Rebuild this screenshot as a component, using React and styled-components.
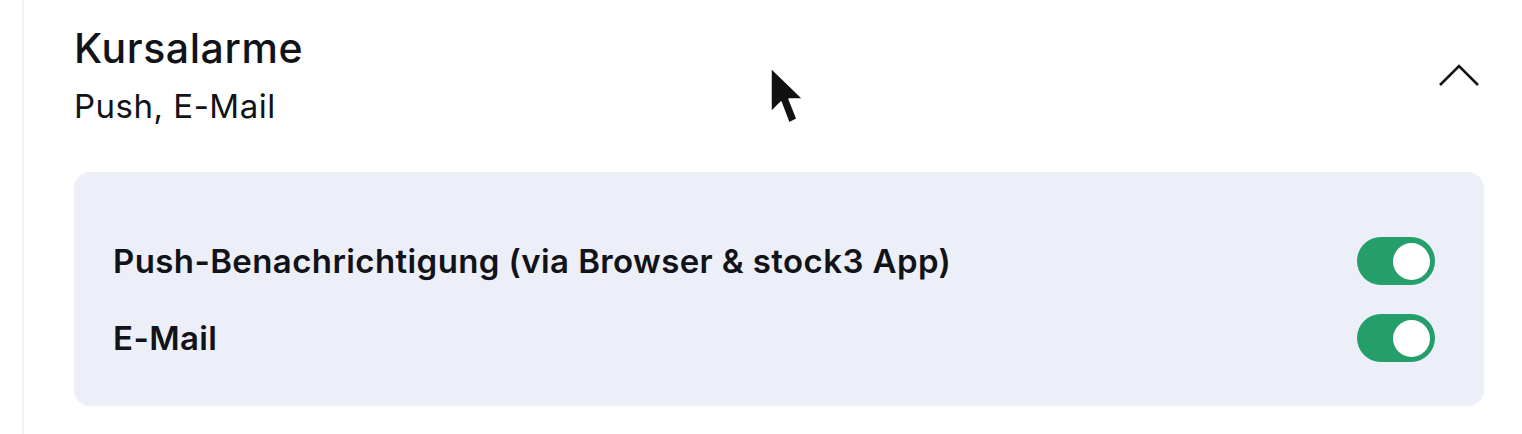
import styled, { createGlobalStyle } from "styled-components";

const GlobalStyle = createGlobalStyle`
  html, body {
    margin: 0;
    padding: 0;
    background: #ffffff;
  }
  body {
    font-family: Inter, "Noto Sans", sans-serif;
    color: #111318;
  }
`;

const Page = styled.div`
  position: relative;
  height: 434px;
  padding-left: 22px;
  overflow: hidden;
`;

const Section = styled.section`
  height: 100%;
  border-left: 2px solid #eef0f4;
  padding: 24px 38px 0 50px;
`;

const Header = styled.div`
  display: flex;
  align-items: center;
  justify-content: space-between;
`;

const Titles = styled.div`
  display: flex;
  flex-direction: column;
`;

const Title = styled.h2`
  margin: 0;
  font-size: 41px;
  line-height: 48px;
  font-weight: 500;
  letter-spacing: 0.6px;
`;

const Subtitle = styled.div`
  margin-top: 15px;
  font-size: 33px;
  line-height: 38px;
  font-weight: 400;
  letter-spacing: 0.5px;
`;

const Chevron = styled.button`
  border: 0;
  background: none;
  padding: 0;
  margin-right: 2px;
  display: flex;
`;

const Panel = styled.div`
  margin-top: 47px;
  background: #eceff7;
  border-radius: 16px;
  padding: 65px 49px 44px 39px;
  display: flex;
  flex-direction: column;
  gap: 29px;
`;

const Row = styled.label`
  display: flex;
  align-items: center;
  justify-content: space-between;
`;

const RowLabel = styled.span`
  font-size: 33px;
  font-weight: 600;
  letter-spacing: 0.4px;
`;

const Toggle = styled.span`
  width: 78px;
  height: 48px;
  border-radius: 24px;
  background: ${(p) => (p.on ? "#249f6b" : "#c5cad6")};
  display: flex;
  align-items: center;
  justify-content: ${(p) => (p.on ? "flex-end" : "flex-start")};
  padding: 0 5px;
  box-sizing: border-box;
`;

const Knob = styled.span`
  width: 37px;
  height: 37px;
  border-radius: 50%;
  background: #ffffff;
`;

const Cursor = styled.svg`
  position: absolute;
  left: 768px;
  top: 66px;
`;

const options = [
  { id: "push", label: "Push-Benachrichtigung (via Browser & stock3 App)", on: true },
  { id: "mail", label: "E-Mail", on: true },
];

export default function App() {
  return (
    <>
      <GlobalStyle />
      <Page>
        <Section>
          <Header>
            <Titles>
              <Title>Kursalarme</Title>
              <Subtitle>Push, E-Mail</Subtitle>
            </Titles>
            <Chevron aria-label="Einklappen">
              <svg width="44" height="26" viewBox="0 0 44 26">
                <polyline
                  points="2,23 21,4 40,23"
                  fill="none"
                  stroke="#111318"
                  strokeWidth="2.6"
                />
              </svg>
            </Chevron>
          </Header>
          <Panel>
            {options.map((o) => (
              <Row key={o.id}>
                <RowLabel>{o.label}</RowLabel>
                <Toggle on={o.on}>
                  <Knob />
                </Toggle>
              </Row>
            ))}
          </Panel>
        </Section>
        <Cursor width="40" height="60" viewBox="0 0 40 60">
          <path
            d="M3 2 L3 46 L13 36 L21 57 L29 53 L21 33 L35 33 Z"
            fill="#111"
            stroke="#fff"
            strokeWidth="1.5"
            strokeLinejoin="round"
          />
        </Cursor>
      </Page>
    </>
  );
}
